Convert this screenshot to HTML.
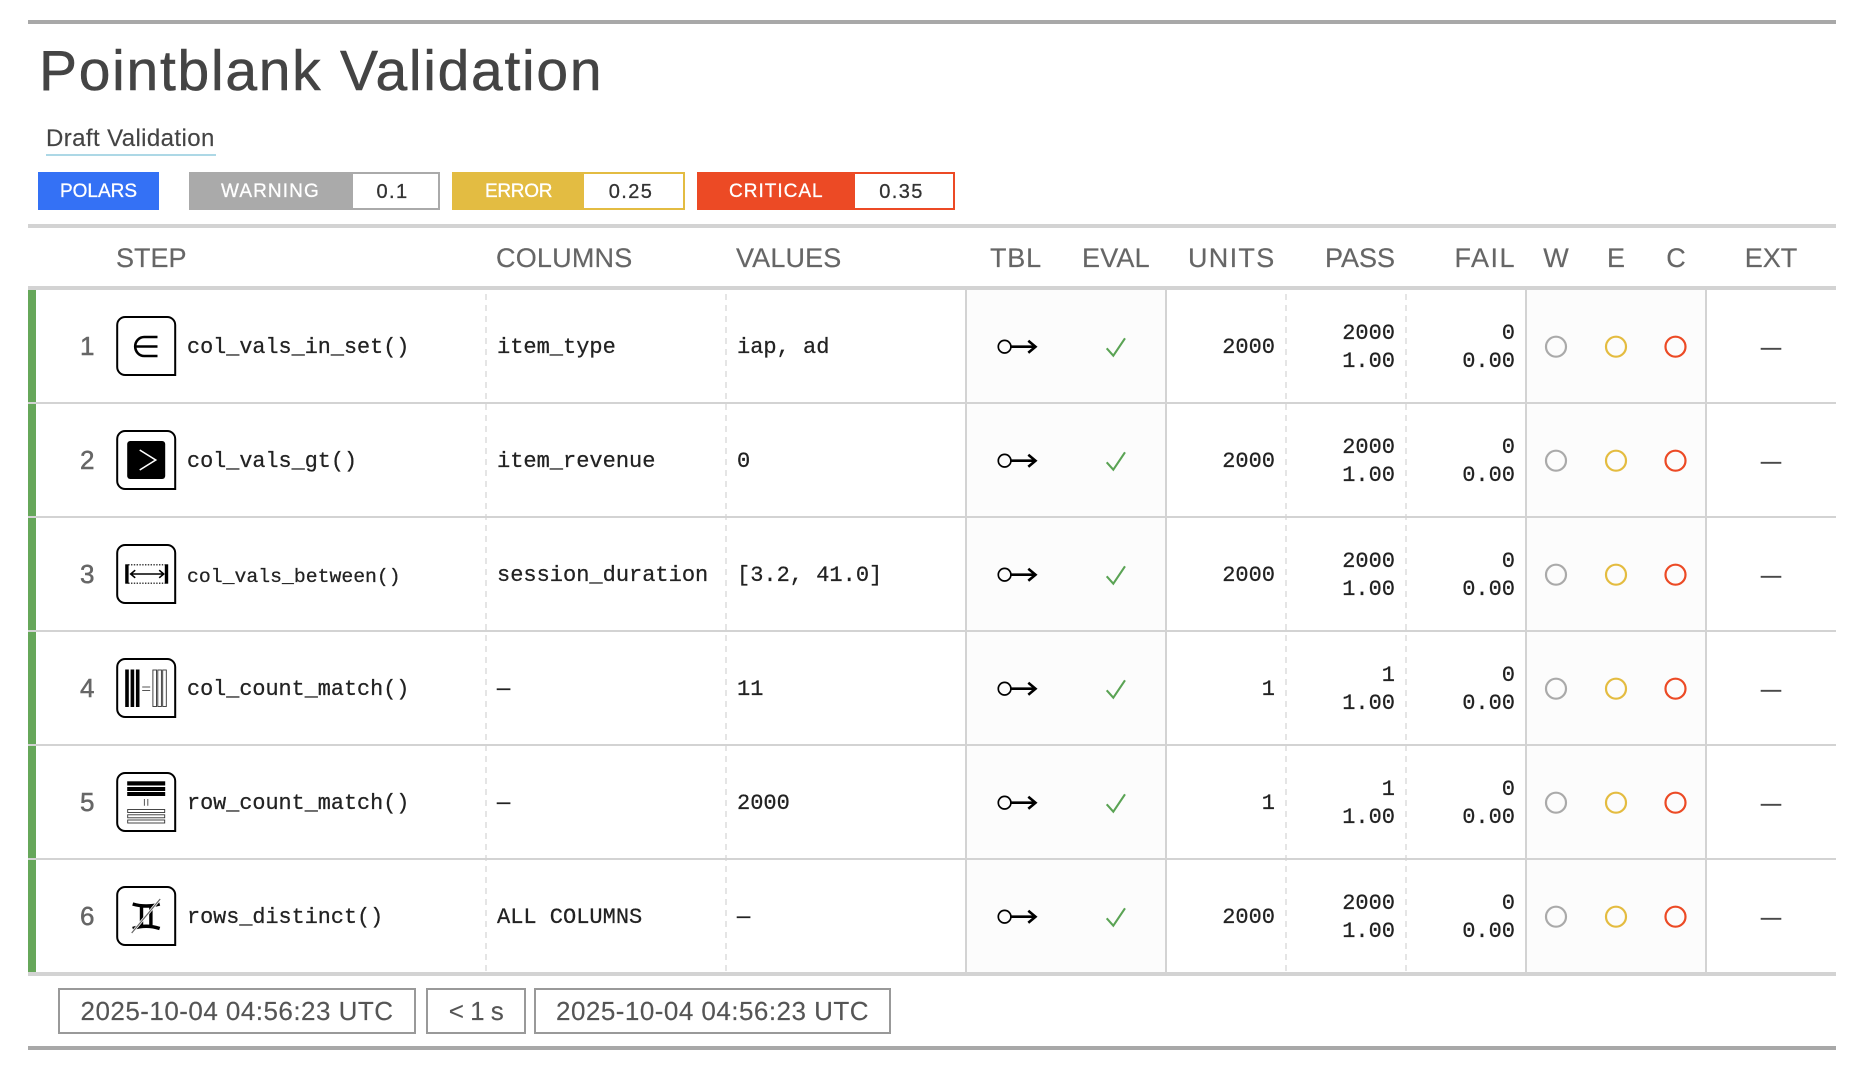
<!DOCTYPE html>
<html><head><meta charset="utf-8"><title>Pointblank Validation</title>
<style>
html,body{margin:0;padding:0;background:#fff}
body{width:1864px;height:1074px;position:relative;overflow:hidden;font-family:"Liberation Sans",sans-serif}
.a{position:absolute;white-space:nowrap}
.l{position:absolute;left:28px;width:1808px}
.title{left:39px;top:39px;font-size:57px;line-height:64px;letter-spacing:1.72px;color:#444;-webkit-text-stroke:.5px #444}
.sub{left:46px;top:124px;font-size:24px;line-height:30px;letter-spacing:.4px;color:#444;-webkit-text-stroke:.15px #444;border-bottom:2px solid #add8e6;height:30px;width:170px}
.p{top:172px;height:38px;line-height:40px;font-size:19px;color:#fff;text-align:center;box-sizing:border-box;-webkit-text-stroke:.3px #fff}
.v{top:174px;height:34px;line-height:36px;font-size:20px;letter-spacing:1.4px;color:#333;-webkit-text-stroke:.3px #333;background:#fff;text-align:center;box-sizing:border-box}
.h{top:240px;line-height:36px;font-size:27px;color:#666;-webkit-text-stroke:.2px #666}
.vs{position:absolute;top:290px;height:682px;width:2px;background:#d3d3d3}
.vd{position:absolute;top:294px;height:678px;width:2px;background:repeating-linear-gradient(#e5e5e5 0 6px,transparent 6px 11px)}
.r{position:absolute;left:0;width:1864px;height:114px}
.r svg{position:absolute;left:0;top:0}
.c{position:absolute;top:2px;height:112px;line-height:112px;white-space:nowrap;font-family:"Liberation Mono",monospace;font-size:22px;color:#222;-webkit-text-stroke:.25px #222}
.n{top:0;left:60px;width:34.5px;text-align:right;font-family:"Liberation Sans",sans-serif;font-size:26px;color:#666;-webkit-text-stroke:.5px #666}
.f{left:187px;font-size:21.8px}.k{left:497px}.w{left:737px}
.u{left:1175px;width:100px;text-align:right}
.t{position:absolute;top:30px;line-height:28.4px;font-family:"Liberation Mono",monospace;font-size:22px;color:#222;-webkit-text-stroke:.25px #222;text-align:right;white-space:nowrap}
.ps{left:1295px;width:100px}.fl{left:1415px;width:100px}
.x{left:1706px;width:130px;text-align:center;font-family:"Liberation Sans",sans-serif;font-size:20px;color:#444;-webkit-text-stroke:.6px #444}
.b{top:988px;height:46px;border:2px solid #999;box-sizing:border-box;line-height:42px;font-size:26px;color:#555;text-align:center;-webkit-text-stroke:.15px #555}
</style></head><body>
<svg width="0" height="0" style="position:absolute"><defs>
<g id="box"><path d="M-21,-29H21A8,8 0 0 1 29,-21V29H-21A8,8 0 0 1 -29,21V-21A8,8 0 0 1 -21,-29Z" fill="#fff" stroke="#000" stroke-width="2"/></g>
<g id="com" fill="none">
<circle cx="1004.6" cy="56.7" r="6.3" stroke="#000" stroke-width="1.7"/>
<path d="M1011,56.7H1035M1028.3,50.7L1035.5,56.7L1028.3,62.7" stroke="#000" stroke-width="2.6"/>
<path d="M1106.7,58.3L1113.3,65.7L1125,48.3" stroke="#5aa354" stroke-width="2.1"/>
<circle cx="1556" cy="56.7" r="10" stroke="#aaa" stroke-width="2.2"/>
<circle cx="1616" cy="56.7" r="10" stroke="#e4bc40" stroke-width="2.2"/>
<circle cx="1675.5" cy="56.7" r="10" stroke="#ec4a25" stroke-width="2.2"/>
</g></defs></svg>

<div class="l" style="top:20px;height:4px;background:#a8a8a8"></div>
<div class="a title">Pointblank Validation</div>
<div class="a sub">Draft Validation</div>

<div class="a p" style="left:38px;width:121px;background:#3471f5">POLARS</div>
<div class="a p" style="left:189px;width:251px;background:#aaa;text-align:left;padding-left:32px;letter-spacing:1.1px">WARNING</div>
<div class="a v" style="left:353px;width:85px;padding-right:6px">0.1</div>
<div class="a p" style="left:452px;width:233px;background:#e3bc42;text-align:left;padding-left:33px;letter-spacing:-.3px">ERROR</div>
<div class="a v" style="left:584px;width:99px;padding-right:5px">0.25</div>
<div class="a p" style="left:697px;width:258px;background:#ec4a25;text-align:left;padding-left:32px;letter-spacing:1px">CRITICAL</div>
<div class="a v" style="left:855px;width:98px;padding-right:5px">0.35</div>

<div class="l" style="top:224px;height:4px;background:#d3d3d3"></div>
<div class="a h" style="left:116px">STEP</div>
<div class="a h" style="left:496px;letter-spacing:.2px">COLUMNS</div>
<div class="a h" style="left:736px;letter-spacing:.15px">VALUES</div>
<div class="a h" style="left:990px;letter-spacing:.8px">TBL</div>
<div class="a h" style="left:1082px;letter-spacing:.2px">EVAL</div>
<div class="a h" style="left:1175px;width:100.5px;text-align:right;letter-spacing:1.3px">UNITS</div>
<div class="a h" style="left:1295px;width:100px;text-align:right">PASS</div>
<div class="a h" style="left:1415px;width:101px;text-align:right;letter-spacing:1.5px">FAIL</div>
<div class="a h" style="left:1526px;width:60px;text-align:center">W</div>
<div class="a h" style="left:1586px;width:60px;text-align:center">E</div>
<div class="a h" style="left:1646px;width:60px;text-align:center">C</div>
<div class="a h" style="left:1706px;width:130px;text-align:center">EXT</div>
<div class="l" style="top:286px;height:4px;background:#d3d3d3"></div>

<div class="a" style="left:966px;top:290px;width:200px;height:682px;background:#fcfcfc"></div>
<div class="a" style="left:1526px;top:290px;width:180px;height:682px;background:#fcfcfc"></div>
<div class="vd" style="left:485px"></div>
<div class="vd" style="left:725px"></div>
<div class="vd" style="left:1285px"></div>
<div class="vd" style="left:1405px"></div>
<div class="vs" style="left:965px"></div>
<div class="vs" style="left:1165px"></div>
<div class="vs" style="left:1525px"></div>
<div class="vs" style="left:1705px"></div>
<div class="a" style="left:28px;top:290px;width:8px;height:682px;background:#66a75a"></div>
<div class="l" style="top:402px;height:2px;background:#d3d3d3"></div>
<div class="l" style="top:516px;height:2px;background:#d3d3d3"></div>
<div class="l" style="top:630px;height:2px;background:#d3d3d3"></div>
<div class="l" style="top:744px;height:2px;background:#d3d3d3"></div>
<div class="l" style="top:858px;height:2px;background:#d3d3d3"></div>

<div class="r" style="top:290px">
<svg width="1864" height="114"><use href="#com"/><g transform="translate(146.2,56)"><use href="#box"/><path d="M11.3,-9H-2A9,9.5 0 0 0 -2,10H11.3M-12,.5H11.3" fill="none" stroke="#000" stroke-width="2.6"/></g></svg>
<div class="c n">1</div><div class="c f">col_vals_in_set()</div><div class="c k">item_type</div><div class="c w">iap, ad</div><div class="c u">2000</div>
<div class="t ps">2000<br>1.00</div><div class="t fl">0<br>0.00</div><div class="c x">—</div>
</div>

<div class="r" style="top:404px">
<svg width="1864" height="114"><use href="#com"/><g transform="translate(146.2,56)"><use href="#box"/><rect x="-19" y="-19" width="38" height="38" rx="3" fill="#000"/><path d="M-6.5,-10L9.5,0L-6.5,10" fill="none" stroke="#fff" stroke-width="1.6"/></g></svg>
<div class="c n">2</div><div class="c f">col_vals_gt()</div><div class="c k">item_revenue</div><div class="c w">0</div><div class="c u">2000</div>
<div class="t ps">2000<br>1.00</div><div class="t fl">0<br>0.00</div><div class="c x">—</div>
</div>

<div class="r" style="top:518px">
<svg width="1864" height="114"><use href="#com"/><g transform="translate(146.2,56)"><use href="#box"/><rect x="-21" y="-9.7" width="3.4" height="19.4" fill="#000"/><rect x="18.6" y="-9.7" width="3.4" height="19.4" fill="#000"/><path d="M-18,-9.2H19M-18,9.2H19" stroke="#000" stroke-width="1.1" stroke-dasharray="1.4 1.4" fill="none"/><path d="M-15.5,0H17.5M-11,-3.8L-15.5,0L-11,3.8M13,-3.8L17.5,0L13,3.8" fill="none" stroke="#000" stroke-width="1.6"/></g></svg>
<div class="c n">3</div><div class="c f" style="font-size:19.8px;top:3px">col_vals_between()</div><div class="c k">session_duration</div><div class="c w">[3.2, 41.0]</div><div class="c u">2000</div>
<div class="t ps">2000<br>1.00</div><div class="t fl">0<br>0.00</div><div class="c x">—</div>
</div>

<div class="r" style="top:632px">
<svg width="1864" height="114"><use href="#com"/><g transform="translate(146.2,56)"><use href="#box"/><rect x="-21" y="-18.5" width="3.6" height="37.5" fill="#000"/><rect x="-15.6" y="-18.5" width="3.6" height="37.5" fill="#000"/><rect x="-10.3" y="-18.5" width="3.6" height="37.5" fill="#000"/><path d="M-4,-1H4M-4,2.5H4" stroke="#555" stroke-width="1" fill="none"/><g fill="#fff" stroke="#333" stroke-width=".9"><rect x="6.7" y="-18" width="3.6" height="36.5"/><rect x="11.6" y="-18" width="3.6" height="36.5"/><rect x="16.5" y="-18" width="3.6" height="36.5"/></g></g></svg>
<div class="c n">4</div><div class="c f">col_count_match()</div><div class="c k">—</div><div class="c w">11</div><div class="c u">1</div>
<div class="t ps">1<br>1.00</div><div class="t fl">0<br>0.00</div><div class="c x">—</div>
</div>

<div class="r" style="top:746px">
<svg width="1864" height="114"><use href="#com"/><g transform="translate(146.2,56)"><use href="#box"/><rect x="-19" y="-20.7" width="38" height="4.2" fill="#000"/><rect x="-19" y="-15" width="38" height="4" fill="#000"/><rect x="-19" y="-10" width="38" height="4" fill="#000"/><path d="M-1.8,-3V3.7M1.6,-3V3.7" stroke="#555" stroke-width="1" fill="none"/><g fill="#fff" stroke="#333" stroke-width=".9"><rect x="-18.5" y="7.5" width="37" height="3"/><rect x="-18.5" y="12.8" width="37" height="3"/><rect x="-18.5" y="18" width="37" height="3"/></g></g></svg>
<div class="c n">5</div><div class="c f">row_count_match()</div><div class="c k">—</div><div class="c w">2000</div><div class="c u">1</div>
<div class="t ps">1<br>1.00</div><div class="t fl">0<br>0.00</div><div class="c x">—</div>
</div>

<div class="r" style="top:860px">
<svg width="1864" height="114"><use href="#com"/><g transform="translate(146.2,56)"><use href="#box"/><path d="M-13.5,-12Q0,-8 13.5,-12M-13.5,12.5Q0,8 13.5,12.5M-4.7,-9V10M4.7,-9V10" fill="none" stroke="#000" stroke-width="3.4"/><path d="M14,-17L-14.5,17" stroke="#fff" stroke-width="2.6" fill="none"/><path d="M14,-17L-14.5,17" stroke="#666" stroke-width="1.2" fill="none"/></g></svg>
<div class="c n">6</div><div class="c f">rows_distinct()</div><div class="c k">ALL COLUMNS</div><div class="c w">—</div><div class="c u">2000</div>
<div class="t ps">2000<br>1.00</div><div class="t fl">0<br>0.00</div><div class="c x">—</div>
</div>

<div class="l" style="top:972px;height:4px;background:#d3d3d3"></div>
<div class="a b" style="left:58px;width:358px;letter-spacing:.47px">2025-10-04 04:56:23 UTC</div>
<div class="a b" style="left:426px;width:100px;letter-spacing:-.5px">&lt; 1 s</div>
<div class="a b" style="left:534px;width:357px;letter-spacing:.47px">2025-10-04 04:56:23 UTC</div>
<div class="l" style="top:1046px;height:4px;background:#a8a8a8"></div>
</body></html>
